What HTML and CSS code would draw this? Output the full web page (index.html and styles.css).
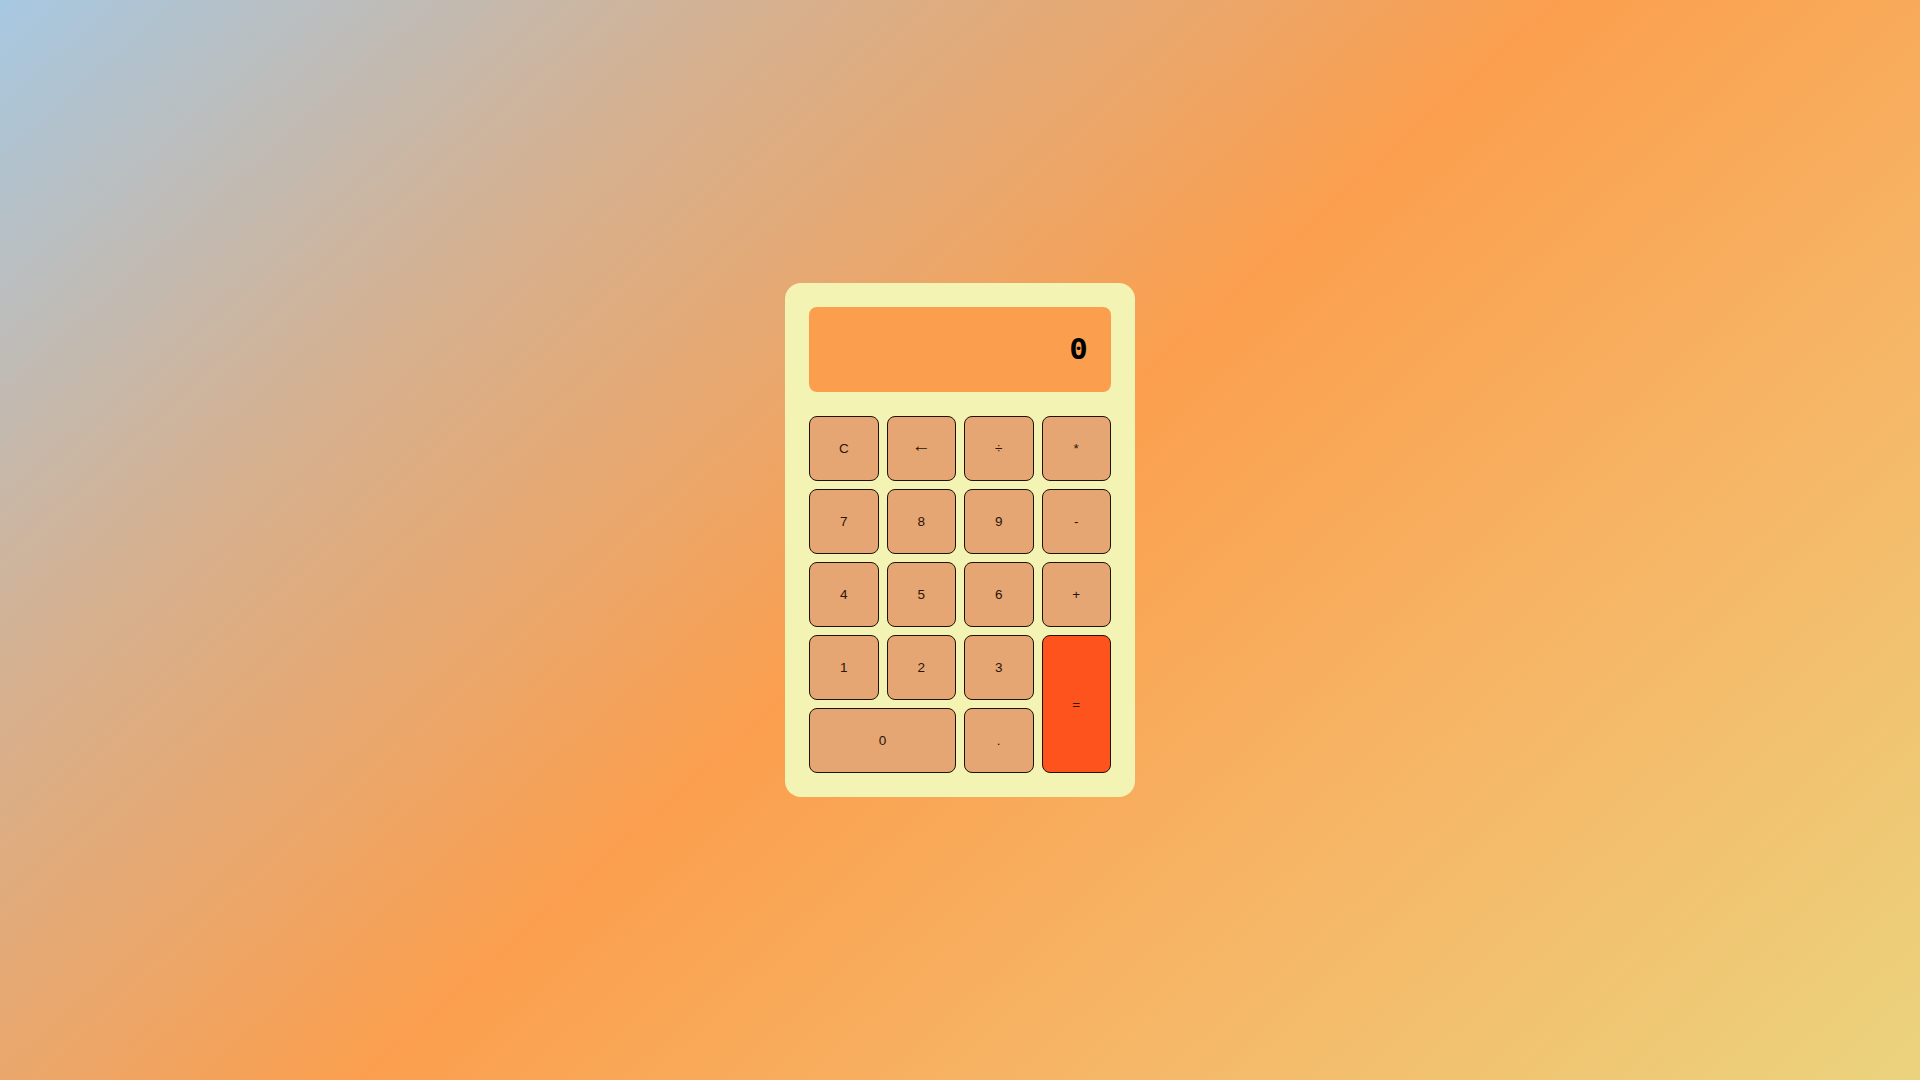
FILE: index.html
```html
<!DOCTYPE html>
<html lang="en">
<head>
<meta charset="utf-8">
<title>Calculator</title>
<link rel="stylesheet" href="styles.css">
</head>
<body>
<main class="stage">
  <div class="calculator">
    <div class="display"><span class="display-value">0</span></div>
    <div class="keys">
      <button class="key">C</button>
      <button class="key key-arrow">&larr;</button>
      <button class="key">&divide;</button>
      <button class="key">*</button>
      <button class="key">7</button>
      <button class="key">8</button>
      <button class="key">9</button>
      <button class="key">-</button>
      <button class="key">4</button>
      <button class="key">5</button>
      <button class="key">6</button>
      <button class="key">+</button>
      <button class="key">1</button>
      <button class="key">2</button>
      <button class="key">3</button>
      <button class="key key-equals">=</button>
      <button class="key key-zero">0</button>
      <button class="key">.</button>
    </div>
  </div>
</main>
</body>
</html>
```
FILE: styles.css
```css
html, body {
  margin: 0;
  padding: 0;
  height: 100%;
}
body {
  background: linear-gradient(138deg, #a6c8e2 0%, #d6b08e 25%, #fb9f4e 50%, #f5b868 75%, #ebd37d 100%);
  font-family: "Liberation Sans", Arial, sans-serif;
}
.stage {
  height: 100vh;
  display: flex;
  align-items: center;
  justify-content: center;
}
.calculator {
  width: 302px;
  padding: 24px;
  background: #f3f3b4;
  border-radius: 16px;
}
.display {
  height: 85px;
  background: #fb9f4f;
  border-radius: 8px;
  display: flex;
  align-items: center;
  justify-content: flex-end;
  padding: 0 23px;
  box-sizing: border-box;
  margin-bottom: 24px;
}
.display-value {
  display: inline-block;
  font-family: "DejaVu Sans Mono", "Liberation Mono", monospace;
  font-weight: bold;
  font-size: 28px;
  color: #000;
  transform: scaleX(1.1);
  transform-origin: right center;
}
.keys {
  display: grid;
  grid-template-columns: repeat(4, 1fr);
  grid-auto-rows: 65px;
  gap: 8px;
}
.key {
  background: #e6a673;
  border: 1px solid #1e120a;
  border-radius: 8px;
  font-family: "Liberation Sans", Arial, sans-serif;
  font-size: 13.5px;
  color: #2a1508;
  padding: 0;
  margin: 0;
}
.key-arrow {
  font-family: "Liberation Sans", Arial, sans-serif;
  font-size: 19px;
  padding-bottom: 5px;
}
.key-equals {
  background: #fe531d;
  grid-column: 4;
  grid-row: 4 / span 2;
}
.key-zero {
  grid-column: 1 / span 2;
}
```
